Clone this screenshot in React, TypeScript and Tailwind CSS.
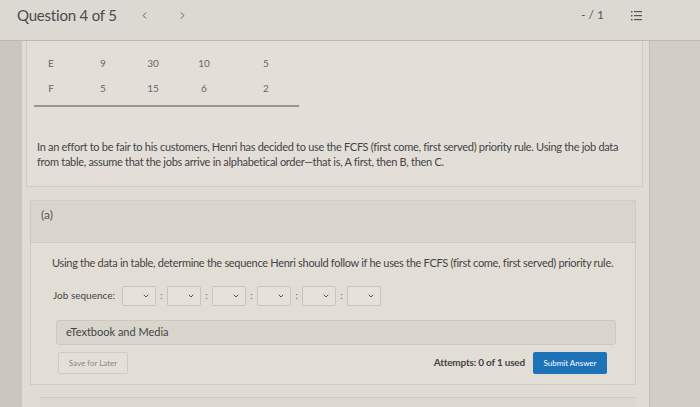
import { ChevronDown, ChevronLeft, ChevronRight } from "lucide-react";

const font = { fontFamily: "Lato, 'Open Sans', sans-serif" };

function Select() {
  return (
    <div className="w-[34px] h-[20px] border border-[#c9c5bd] rounded-[2px] bg-[#e6e2db] flex items-center justify-end pr-[5px]">
      <ChevronDown className="w-[8px] h-[8px] text-[#555]" strokeWidth={3} />
    </div>
  );
}

const rows = [
  ["E", "9", "30", "10", "5"],
  ["F", "5", "15", "6", "2"],
];

export default function App() {
  return (
    <div className="w-[700px] h-[407px] overflow-hidden bg-[#d6d2cb] text-[#444]" style={font}>
      {/* Top bar */}
      <div className="h-[41px] flex items-center bg-[#dcd9d3] border-b border-[#bdb9b2] pl-[17px] pr-[58px] pb-[10px]">
        <span className="text-[15px] text-[#4a4a4a] tracking-[-0.2px]">Question 4 of 5</span>
        <ChevronLeft className="ml-[22px] w-[11px] h-[11px] text-[#555]" strokeWidth={2} />
        <ChevronRight className="ml-[27px] w-[11px] h-[11px] text-[#555]" strokeWidth={2} />
        <span className="ml-auto text-[12px] text-[#555]">- / 1</span>
        <svg className="ml-[27px]" width="11" height="11" viewBox="0 0 11 11">
          <g fill="#555">
            <rect x="0" y="1" width="1.5" height="1.5" />
            <rect x="0" y="5" width="1.5" height="1.5" />
            <rect x="0" y="9" width="1.5" height="1.5" />
            <rect x="3" y="1" width="8" height="1.2" />
            <rect x="3" y="5" width="8" height="1.2" />
            <rect x="3" y="9" width="8" height="1.2" />
          </g>
        </svg>
      </div>

      <div className="flex">
        <div className="w-[22px] bg-[#cbc7c0] h-[366px]" />
        <div className="w-[628px] bg-[#e0dcd5] h-[366px] border-r border-[#c4c0b9]">
          {/* Question card */}
          <div className="ml-[4px] mr-[6px] border-x border-b border-[#d0ccc5] bg-[#e3dfd8] h-[146px]">
            <div className="pl-[7px] pt-[10px]">
              {rows.map((r) => (
                <div key={r[0]} className="grid grid-cols-[34px_70px_30px_72px_52px] h-[25px] items-center text-[10px] text-[#666]">
                  {r.map((c, i) => (
                    <span key={i} className="text-center">{c}</span>
                  ))}
                </div>
              ))}
              <div className="w-[265px] border-b-2 border-[#9a968f] mt-[4px]" />
            </div>
            <p className="pl-[10px] pt-[32px] text-[11px] leading-[15px] text-[#444] tracking-[-0.3px]">
              In an effort to be fair to his customers, Henri has decided to use the FCFS (first come, first served) priority rule. Using the job data
              <br />
              from table, assume that the jobs arrive in alphabetical order—that is, A first, then B, then C.
            </p>
          </div>

          {/* Part (a) */}
          <div className="mt-[13px] ml-[8px] mr-[13px] border border-[#d0ccc5] bg-[#e2ded6] h-[185px]">
            <div className="h-[42px] bg-[#d9d5cd] border-b border-[#cfcbc3] pl-[10px] pt-[5px] text-[12px] text-[#555]">(a)</div>
            <div className="pl-[21px] pr-[19px]">
              <p className="pt-[12px] text-[11px] text-[#444] tracking-[-0.3px]">
                Using the data in table, determine the sequence Henri should follow if he uses the FCFS (first come, first served) priority rule.
              </p>
              <div className="mt-[14px] flex items-center">
                <span className="w-[70px] pl-[1px] text-[10px] text-[#444]">Job sequence:</span>
                <div className="flex items-center">
                  {[0, 1, 2, 3, 4, 5].map((i) => (
                    <div key={i} className="flex items-center">
                      {i > 0 && <span className="w-[11px] text-center text-[10px] text-[#666]">:</span>}
                      <Select />
                    </div>
                  ))}
                </div>
              </div>
              <div className="mt-[14px] ml-[4px] h-[25px] bg-[#d9d5cd] border border-[#ccc8c0] rounded-[3px] flex items-center pl-[9px] text-[11px] text-[#444]">
                eTextbook and Media
              </div>
              <div className="mt-[7px] ml-[6px] flex items-center">
                <div className="w-[70px] h-[22px] border border-[#cfcbc3] rounded-[2px] bg-[#e4e0d9] flex items-center justify-center text-[8px] text-[#888]">
                  Save for Later
                </div>
                <span className="ml-auto text-[10px] font-bold text-[#444] tracking-[-0.2px]">Attempts: 0 of 1 used</span>
                <div className="ml-[8px] mr-[9px] w-[74px] h-[22px] rounded-[2px] bg-[#1d72b8] flex items-center justify-center text-[8px] text-white">
                  Submit Answer
                </div>
              </div>
            </div>
          </div>
          <div className="mt-[12px] ml-[18px] mr-[13px] border-t border-[#cfcbc3] bg-[#dcd8d0] h-[20px]" />
        </div>
        <div className="flex-1 bg-[#d2cec7] h-[366px]" />
      </div>
    </div>
  );
}
